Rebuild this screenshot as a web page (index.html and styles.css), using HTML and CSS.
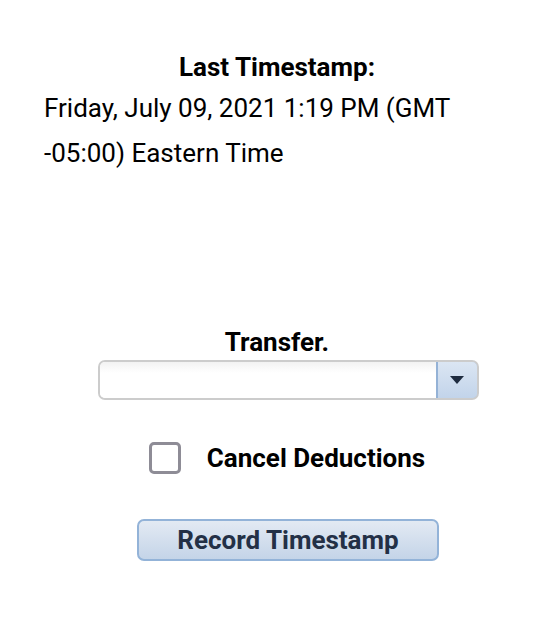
FILE: index.html
```html
<!DOCTYPE html>
<html>
<head>
<meta charset="utf-8">
<link rel="stylesheet" href="styles.css">
</head>
<body>
<div class="page">
  <section class="timestamp">
    <h2 class="ts-title">Last Timestamp:</h2>
    <p class="ts-value">Friday, July 09, 2021 1:19 PM (GMT -05:00) Eastern Time</p>
  </section>
  <section class="form">
    <div class="field-label">Transfer.</div>
    <div class="combo">
      <div class="combo-input"></div>
      <div class="combo-btn">
        <svg width="16" height="10" viewBox="0 0 16 10"><path d="M1 1 L15 1 L8 9 Z" fill="#1f2c40"/></svg>
      </div>
    </div>
    <label class="check-row">
      <span class="checkbox"></span>
      <span class="check-label">Cancel Deductions</span>
    </label>
    <button class="record-btn">Record Timestamp</button>
  </section>
</div>
</body>
</html>
```

FILE: styles.css
```css
html, body {
  margin: 0;
  padding: 0;
  background: #ffffff;
}
body {
  font-family: Roboto, "Noto Sans", sans-serif;
  color: #000000;
  font-size: 26px;
}
.page {
  width: 554px;
  height: 636px;
  padding: 48px 44px 0 44px;
  box-sizing: border-box;
}
.timestamp {
  width: 466px;
}
.ts-title {
  margin: 0;
  font-size: 26px;
  font-weight: 700;
  text-align: center;
  line-height: 38px;
}
.ts-value {
  margin: 0;
  font-size: 26px;
  font-weight: 400;
  line-height: 45px;
}
.form {
  margin-top: 148px;
  display: flex;
  flex-direction: column;
  align-items: center;
  width: 466px;
}
.field-label {
  font-weight: 700;
  line-height: 36px;
}
.combo {
  display: flex;
  width: 381px;
  height: 40px;
  margin-left: 22px;
  box-sizing: border-box;
  border: 2px solid #cccccc;
  border-radius: 7px;
  overflow: hidden;
}
.combo-input {
  flex: 1;
  background: linear-gradient(#f2f2f2, #ffffff 30%);
}
.combo-btn {
  width: 43px;
  box-sizing: border-box;
  margin: -2px -2px -2px 0;
  border: 2px solid #94b2d6;
  border-radius: 0 7px 7px 0;
  background: linear-gradient(#dbe6f3, #c2d4ea);
  display: flex;
  align-items: center;
  justify-content: center;
}
.check-row {
  display: flex;
  align-items: center;
  margin-top: 42px;
  margin-left: 20px;
}
.checkbox {
  width: 32px;
  height: 32px;
  box-sizing: border-box;
  border: 3px solid #8e8c96;
  border-radius: 5px;
  background: #fff;
}
.check-label {
  margin-left: 26px;
  font-weight: 700;
}
.record-btn {
  margin-top: 45px;
  margin-left: 22px;
  width: 302px;
  height: 42px;
  font-family: Roboto, "Noto Sans", sans-serif;
  font-size: 26px;
  font-weight: 700;
  color: #233046;
  border: 2px solid #93b3d8;
  border-radius: 7px;
  background: linear-gradient(#e3eaf3, #c4d4e8);
  padding: 0;
}
```
